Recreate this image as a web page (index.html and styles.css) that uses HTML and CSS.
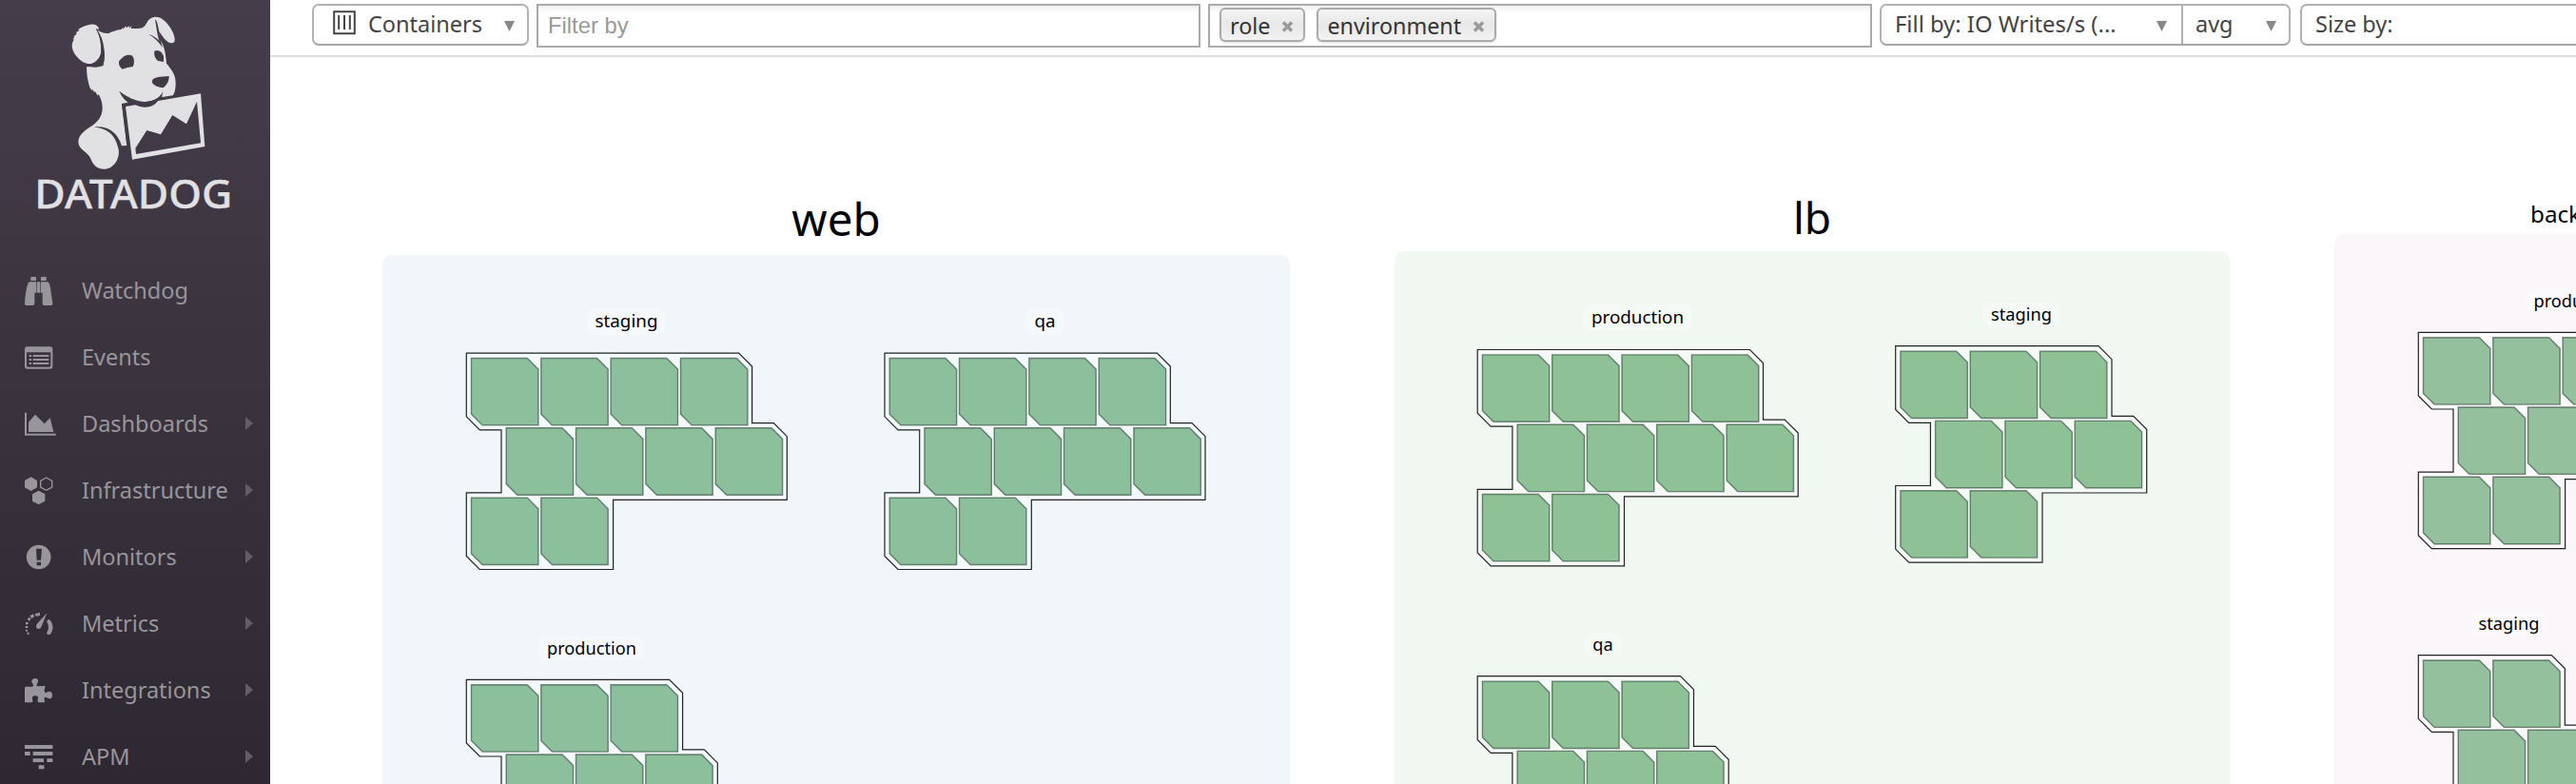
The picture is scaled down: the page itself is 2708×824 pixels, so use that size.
FILE: index.html
```html
<!DOCTYPE html>
<html lang="en">
<head>
<meta charset="utf-8">
<title>Containers</title>
<link rel="stylesheet" href="styles.css">
</head>
<body>
<svg class="defs" width="0" height="0" aria-hidden="true">
  <defs>
    <path id="cell" d="M.5.5H59.3L70.9 12.100V70.900H12.100L.5 59.300Z"/>
    <g id="row2"><use href="#cell"/><use href="#cell" x="73.3"/></g>
    <g id="row3"><use href="#row2"/><use href="#cell" x="146.6"/></g>
    <g id="row4"><use href="#row3"/><use href="#cell" x="220"/></g>
    <g id="c442">
      <path class="edge" d="M0 0H286.300L300.300 14V73.600H323L337 87.600V154.300H154.300V227.400H14L0 213.400V146.800H36.700V80.700H14L0 66.700Z"/>
      <use href="#row4" x="4.700" y="4.900"/><use href="#row4" x="41.400" y="78.200"/><use href="#row2" x="4.700" y="151.500"/>
    </g>
    <g id="c332">
      <path class="edge" d="M0 0H213.300L227.300 14V73.600H250L264 87.600V154.300H154.300V227.400H14L0 213.400V146.800H36.700V80.700H14L0 66.700Z"/>
      <use href="#row3" x="4.700" y="4.900"/><use href="#row3" x="41.400" y="78.200"/><use href="#row2" x="4.700" y="151.500"/>
    </g>
    <g id="c222">
      <path class="edge" d="M0 0H140L154 14V73.600H176.700L190.700 87.600V154.300H154.300V227.400H14L0 213.400V146.800H36.700V80.700H14L0 66.700Z"/>
      <use href="#row2" x="4.700" y="4.900"/><use href="#row2" x="41.400" y="78.200"/><use href="#row2" x="4.700" y="151.500"/>
    </g>
    <path id="caret" d="M0 0H11L5.500 11Z"/>
  </defs>
</svg>
<div class="app">
  <nav class="sidebar">
    <a class="logo">
      <svg viewBox="0 0 852 750" width="284" height="250">
        <path class="lt" d="M343 105C355 99 368 95 382 93L387 88 390 91 396 82 399 88 406 82 408 88 415 82 413 90C428 90 440 91 449 88C464 79 463 63 477 57C496 48 512 57 528 75C544 94 555 120 550 132C541 141 527 133 516 119L501 98 504 125C516 140 522 160 525 200C541 219 554 235 554 261C554 280 551 294 545 301L512 306 508 302 514 289C506 307 488 319 460 321C425 319 400 305 376 287C386 302 401 313 418 323L384 327 400 459 383 460 374 470C379 501 358 533 328 533C304 532 293 518 286 500C276 477 248 474 247 447C248 424 268 412 285 400C305 387 323 369 323 341C323 325 319 314 313 301L309 297 308 302 300 288 297 291 292 281 290 286 283 275C276 254 273 233 273 211L325 208C329 194 330 176 328 159L318 126 303 92C314 99 325 106 343 105Z"/>
        <path class="lt" d="M313 92C307 77 295 74 278 79C263 82 253 88 246 94L251 95 239 103 243 105 232 116 235 118 229 124 234 124C224 137 226 153 234 167C245 185 264 201 284 202C302 199 318 182 319 160C319 135 313 108 303 91Z"/>
        <path class="dk" d="M302 91C314 111 322 139 319 165C316 189 299 202 280 202L272 207C287 213 315 215 325 205C330 190 331 170 328 153C326 130 318 111 307 94ZM489 61C493 83 494 99 500 122L503 128C491 118 481 111 468 107C487 119 502 132 513 150L506 127C503 108 500 83 494 67ZM389 179C398 173 409 172 416 175L420 180C424 190 424 201 419 210C407 212 398 214 386 218C376 211 373 201 376 191ZM487 161C494 157 504 160 509 165L516 176V195L499 192C490 185 485 176 487 161ZM481 252C486 244 505 241 533 240C534 253 526 270 514 277C498 276 481 267 479 258ZM376 287C398 308 426 323 460 321C488 319 506 308 514 288L511 303 498 320C481 338 442 342 412 329C396 319 384 306 376 287Z"/>
        <path class="dk" d="M297 401C336 395 370 415 384 460L374 472C366 430 345 405 297 401Z"/>
        <path class="dk" d="M384 327L418 322 430 332 396 336 407 459H400Z"/>
        <path class="lt" fill-rule="evenodd" d="M396 336L427 331C454 344 484 339 498 318L633 295 646 462 417 503ZM427 467L429 486 633 451 621 320 588 391 544 363 507 424 463 411Z"/>
        <text class="brand" x="109" y="657" textLength="624" lengthAdjust="spacingAndGlyphs">DATADOG</text>
      </svg>
    </a>
    <ul class="menu">
      <li><svg class="ico" viewBox="0 0 99 99"><path d="M19 6h17v12H19zM51 6h17v12H51zM51 22H73Q79 26 81 42L88 90Q88 96 84 96H60Q56 94 56 90V56H51ZM38 22H49V56H38ZM14 22H36V56H31V90Q30 96 26 96H4Q0 96 0 90Q2 52 10 27Z"/></svg><span>Watchdog</span></li>
      <li><svg class="ico" viewBox="0 0 99 99"><path fill-rule="evenodd" d="M8 16H80Q88 16 88 24V78Q88 86 80 86H8Q0 86 0 78V24Q0 16 8 16ZM6 34V76Q6 80 10 80H78Q82 80 82 76V34ZM14 42h7v6h-7zM26 42H76v6H26zM14 54h7v6h-7zM26 54H76v6H26zM14 66h7v6h-7zM26 66H76v6H26z"/></svg><span>Events</span></li>
      <li><svg class="ico" viewBox="0 0 99 99"><path d="M0 14H6V80H98V86H0ZM12 75V44L33 20 62 49 80 31 91 75Z"/></svg><span>Dashboards</span><i></i></li>
      <li><svg class="ico" viewBox="0 0 99 99"><path d="M20 7L39 18V40L20 51 0 40V18ZM44 50L64 61V83L44 94 24 83V61Z"/><path class="line" d="M68 9L86 19V39L68 49 50 39V19Z"/></svg><span>Infrastructure</span><i></i></li>
      <li><svg class="ico" viewBox="0 0 99 99"><path fill-rule="evenodd" d="M44 11A38.500 38.500 0 1 1 44 88A38.500 38.500 0 1 1 44 11ZM36 23L38 59H51L54 23ZM38 65V76H51V65Z"/></svg><span>Monitors</span><i></i></li>
      <li><svg class="ico" viewBox="0 0 99 99"><path d="M70 16L52 60C48 70 34 66 36 56C38 50 40 48 44 44ZM75 35C90 44 94 68 80 83Q72 86 69 80C76 68 77 55 69 43Z"/><path d="M31 19L48 14V24L36 26ZM16 25L26 19 31 27 22 33ZM8 36L13 29 20 34 15 41ZM3 45H11V52H3ZM2 57H10V63H2ZM3 68H9V74H3ZM7 77H14V83H8Z"/></svg><span>Metrics</span><i></i></li>
      <li><svg class="ico" viewBox="0 0 99 99"><path d="M3 38H22C31 38 27 31 24 27C19 19 24 12 33 12C42 12 45 20 40 27C37 33 35 36 43 37L65 36Q62 45 62 51C65 61 68 57 72 55C81 50 87 56 87 65C87 74 80 79 72 74C66 70 61 70 62 78L63 88H43Q39 84 41 77C45 70 39 66 33 67C25 67 22 73 25 80Q26 88 20 88H2Q0 88 0 85V41Z"/></svg><span>Integrations</span><i></i></li>
      <li><svg class="ico" viewBox="0 0 99 99"><path d="M0 12H88V24H0ZM0 33H17V45H0ZM26 33H88V45H26ZM26 55H60V66H26ZM70 55H88V66H70ZM44 76H61V88H44Z"/></svg><span>APM</span><i></i></li>
    </ul>
  </nav>
  <main class="main">
    <header class="toolbar">
      <div class="select scope">
        <svg class="box" width="24" height="26" viewBox="0 0 24 26"><path d="M1.200 1.200H22.800V24.300H1.200ZM6.200 5V20M12 5V20M17.800 5V20"/></svg>
        <span>Containers</span>
        <svg class="caret" width="11" height="11"><use href="#caret"/></svg>
      </div>
      <div class="field filter"><span>Filter by</span></div>
      <div class="field groups">
        <span class="tag">role<svg width="13" height="12" viewBox="0 0 13 12"><path d="M2 1.500L11 10.500M11 1.500L2 10.500"/></svg></span>
        <span class="tag">environment<svg width="13" height="12" viewBox="0 0 13 12"><path d="M2 1.500L11 10.500M11 1.500L2 10.500"/></svg></span>
      </div>
      <div class="select fill">
        <div class="part metric"><span>Fill by: IO Writes/s (...</span><svg class="caret" width="11" height="11"><use href="#caret"/></svg></div>
        <div class="part agg"><span>avg</span><svg class="caret" width="11" height="11"><use href="#caret"/></svg></div>
      </div>
      <div class="select size"><span>Size by:</span></div>
    </header>
    <div class="map">
      <section class="group web">
        <h2>web</h2>
        <div class="panel">
          <div class="cluster w4"><h3 class="big">staging</h3><svg viewBox="-.3 -.1 337 228" width="337" height="228"><use href="#c442"/></svg></div>
          <div class="cluster w4"><h3 class="big">qa</h3><svg viewBox="0 -.1 337 228" width="337" height="228"><use href="#c442"/></svg></div>
          <div class="cluster w3"><h3>production</h3><svg viewBox="-.3 -.3 264 228" width="264" height="228"><use href="#c332"/></svg></div>
        </div>
      </section>
      <section class="group lb">
        <h2>lb</h2>
        <div class="panel">
          <div class="cluster w4"><h3 class="big">production</h3><svg viewBox="-.2 -.5 337 228" width="337" height="228"><use href="#c442"/></svg></div>
          <div class="cluster w3 up"><h3>staging</h3><svg viewBox=".3 -.7 264 228" width="264" height="228"><use href="#c332"/></svg></div>
          <div class="cluster w3"><h3>qa</h3><svg viewBox="-.2 -.7 264 228" width="264" height="228"><use href="#c332"/></svg></div>
        </div>
      </section>
      <section class="group back">
        <h2>back</h2>
        <div class="panel">
          <div class="cluster w4"><h3>production</h3><svg viewBox="-.3 -.3 337 228" width="337" height="228"><use href="#c442"/></svg></div>
          <div class="cluster w2"><h3>staging</h3><svg viewBox="-.3 -.6 191 228" width="191" height="228"><use href="#c222"/></svg></div>
        </div>
      </section>
    </div>
  </main>
</div>
</body>
</html>
```
FILE: styles.css
```css
* { box-sizing: border-box; }
html, body { margin: 0; height: 824px; overflow: hidden; background: #fff; }
body { font-family: "Noto Sans", sans-serif; font-size: 23.5px; }
.defs { display: block; height: 0; position: absolute; }
.app { display: flex; width: 2708px; height: 824px; overflow: hidden; }

/* Sidebar */
.sidebar { flex: none; width: 284px; background: linear-gradient(#453e4a, #2e2832); }
.logo { display: block; height: 270px; }
.logo svg { display: block; overflow: visible; }
.lt { fill: #e1e0e3; }
.dk { fill: #423b46; }
.brand { font: 500 126px "Noto Sans", sans-serif; fill: #e1e0e3; stroke: #e1e0e3; stroke-width: 1; }
.menu { list-style: none; margin: 0; padding: 0; }
.menu li { display: flex; align-items: center; height: 70px; padding: 0 18px 0 26px; color: #98959b; }
.menu span { flex: 1; padding: 0 0 0 27px; line-height: 32px; white-space: nowrap; }
.ico { flex: none; width: 33px; height: 33px; fill: #98959b; overflow: visible; }
.ico .line { fill: none; stroke: #98959b; stroke-width: 4; }
.menu i { border: solid transparent; border-width: 7px 0 7px 8px; border-left-color: #635d68; }

/* Toolbar */
.main { flex: none; width: 2424px; overflow: hidden; }
.toolbar { display: flex; align-items: flex-start; height: 60px; padding: 4px 0 0 44px; border-bottom: 2px solid #ddd; color: #444; }
.select { flex: none; display: flex; align-items: center; height: 44px; border: 2px solid #b2b2b2; border-bottom-color: #a6a6a6; border-radius: 7px; background: #fff; line-height: 32px; white-space: nowrap; }
.select span { padding-bottom: 3px; }
.caret { fill: #888; margin-top: 2px; }
.box { fill: none; stroke: #444; stroke-width: 2; margin-bottom: 4px; }
.scope { width: 228px; padding: 0 13px 0 20px; }
.scope span { margin-left: 13px; flex: 1; }
.field { flex: none; height: 46px; border: 2px solid #aaa; background: linear-gradient(#eee, #fff 7px); }
.filter { width: 698px; margin-left: 8px; padding: 6px 0 0 10px; font: 23.8px/30px "Liberation Sans", sans-serif; color: #999; }
.groups { display: flex; gap: 12px; width: 698px; margin-left: 8px; padding: 2px 10px; }
.tag { display: flex; align-items: center; height: 36px; padding: 1px 10px 0 9px; gap: 12px; border: 2px solid #aaa; border-radius: 6px; background: linear-gradient(#f4f4f4, #e8e8e8 50%, #f2f2f2); box-shadow: 0 1px 2px #ddd; color: #333; font-size: 23.3px; line-height: 30px; }
.tag svg { stroke: #999; stroke-width: 3.3; margin-top: 2px; }
.fill { width: 432px; margin-left: 8px; }
.part { display: flex; align-items: center; justify-content: space-between; height: 40px; padding: 0 13px; }
.metric { width: 317px; padding: 0 15px 0 14px; border-right: 2px solid #b2b2b2; font-size: 23.8px; }
.agg { flex: 1; }
.size { width: 340px; margin-left: 10px; padding-left: 14px; }

/* Container map */
.map { display: flex; align-items: flex-start; height: 764px; padding-left: 118px; overflow: hidden; }
.group { flex: none; }
.group h2 { margin: 0; text-align: center; font-weight: 400; color: #000; }
.web { width: 954px; fill: #8cbf9c; }
.lb { width: 878px; margin-left: 110px; fill: #8ec296; }
.back { width: 954px; margin-left: 110px; fill: #94c09e; }
.web h2 { font-size: 47.5px; line-height: 60px; padding: 140px 0 8px; }
.lb h2 { font-size: 46px; line-height: 60px; padding: 138px 0 6px; }
.back h2 { font-size: 24.2px; line-height: 32px; padding: 149px 0 5px 206px; text-align: left; }
.panel { display: flex; flex-wrap: wrap; align-content: flex-start; column-gap: 103px; height: 800px; padding: 56px 0 0 88px; border-radius: 10px; }
.web .panel { background: #f0f6fa; }
.lb .panel { background: #f1f8f2; padding-left: 87px; }
.back .panel { background: #fbf6fa; padding-top: 56px; }
.cluster { display: flex; flex-direction: column; align-items: center; height: 343px; }
.back .cluster { height: 339px; }
.cluster svg { display: block; overflow: visible; }
.cluster h3 { margin: 2px 0 20px; padding: 0 9px; height: 25px; border-radius: 9px; background: rgba(255, 255, 255, .35); color: #000; font-weight: 400; font-size: 18.2px; line-height: 25px; }
.cluster h3.big { margin: 0 0 19px; height: 28px; font-size: 18.8px; line-height: 27px; }
.w4 { width: 337px; }
.w3 { width: 264px; }
.w2 { width: 191px; }
.back .w4 { margin-right: 400px; }
.up { margin-top: -4px; margin-bottom: 4px; }
#cell { fill: inherit; stroke: rgba(45, 70, 55, .62); stroke-width: 1.4; }
.edge { fill: rgba(255, 255, 255, .3); stroke: #222; stroke-width: 1.2; }
```
